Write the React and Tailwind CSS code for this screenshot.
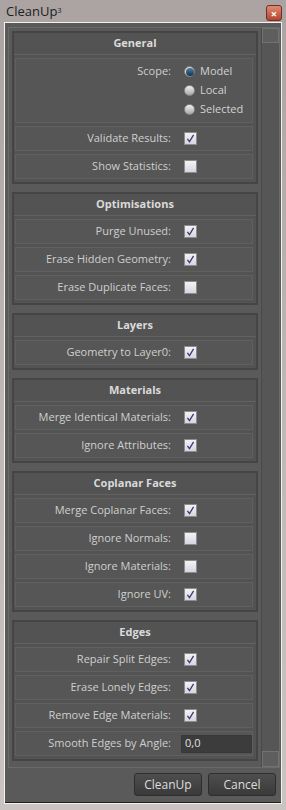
import React from 'react';

const font = { fontFamily: '"Open Sans", "Noto Sans", sans-serif' };

function Check({ on }) {
  return (
    <div className="flex h-[13px] w-[13px] items-center justify-center border border-[#8c8c8c] bg-gradient-to-b from-[#f2f2f6] to-[#d6d6e0]">
      {on && (
        <svg width="9" height="9" viewBox="0 0 9 9">
          <path d="M1.4 4.8 L3.5 7.6 L7.6 0.8" fill="none" stroke="#3d3a6e" strokeWidth="1.3" />
        </svg>
      )}
    </div>
  );
}

function Radio({ on, label }) {
  return (
    <div className="flex h-[19px] items-center">
      {on ? (
        <div className="flex h-[11px] w-[11px] items-center justify-center rounded-full border border-[#7a7a7a] bg-[#d8d8d8]">
          <div className="h-[8px] w-[8px] rounded-full bg-gradient-to-b from-[#4f82a8] to-[#14304a]" />
        </div>
      ) : (
        <div className="h-[11px] w-[11px] rounded-full border border-[#8a8a8a] bg-gradient-to-b from-[#f0f0f0] to-[#a8a8a8]" />
      )}
      <span className="ml-[5px] text-[#d2d2d2]">{label}</span>
    </div>
  );
}

function Row({ label, children }) {
  return (
    <div className="ml-[1px] mr-[3px] flex h-[25px] items-center border border-[#606060] bg-[#565656]">
      <div className="w-[155px] text-right text-[#cfcfcf]">{label}</div>
      <div className="ml-[13px]">{children}</div>
    </div>
  );
}

function Panel({ title, children }) {
  return (
    <div className="border-2 border-[#454545] bg-[#535353] pb-[3px]">
      <div className="flex h-[22px] items-center justify-center border-b border-[#626262] font-bold text-[#dadada]">
        {title}
      </div>
      <div className="flex flex-col gap-[3px] pt-[3px]">{children}</div>
    </div>
  );
}

export default function App() {
  return (
    <div className="h-[810px] w-[286px] overflow-hidden bg-gradient-to-b from-[#aaa3a1] via-[#bdb7b5] to-[#c9c4c2] text-[11px]" style={font}>
      {/* title bar */}
      <div className="flex h-[22px] items-start justify-between pl-[6px] pr-[4px]">
        <div className="pt-[2px] text-[13px] text-[#1e1e1e]">
          CleanUp<sup className="text-[7px]">3</sup>
        </div>
        <div className="mt-[5px] flex h-[16px] w-[16px] items-center justify-center rounded-[3px] border border-[#6e2e22] bg-gradient-to-b from-[#e08a74] to-[#b2442e] text-[11px] font-bold leading-none text-white">
          ×
        </div>
      </div>

      {/* window body */}
      <div className="ml-[4px] flex h-[782px] w-[278px] flex-col border border-[#f2f2f2] bg-[#5a5a5a] shadow-[inset_0_-1px_0_#1e1e1e]">
        <div className="ml-[3px] mt-[4px] flex h-[741px] w-[272px] border border-[#6a6a6a] bg-[#4c4c4c]">
          <div className="flex w-[252px] flex-col gap-[8px] overflow-hidden bg-[#5a5a5a] pl-[3px] pr-[3px] pt-[3px]">
            <Panel title="General">
              <div className="ml-[1px] mr-[3px] flex h-[65px] items-start border border-[#606060] bg-[#565656] pt-[3px]">
                <div className="flex h-[19px] w-[155px] items-center justify-end text-[#cfcfcf]">Scope:</div>
                <div className="ml-[13px] flex flex-col">
                  <Radio on label="Model" />
                  <Radio label="Local" />
                  <Radio label="Selected" />
                </div>
              </div>
              <Row label="Validate Results:"><Check on /></Row>
              <Row label="Show Statistics:"><Check /></Row>
            </Panel>

            <Panel title="Optimisations">
              <Row label="Purge Unused:"><Check on /></Row>
              <Row label="Erase Hidden Geometry:"><Check on /></Row>
              <Row label="Erase Duplicate Faces:"><Check /></Row>
            </Panel>

            <Panel title="Layers">
              <Row label="Geometry to Layer0:"><Check on /></Row>
            </Panel>

            <Panel title="Materials">
              <Row label="Merge Identical Materials:"><Check on /></Row>
              <Row label="Ignore Attributes:"><Check on /></Row>
            </Panel>

            <Panel title="Coplanar Faces">
              <Row label="Merge Coplanar Faces:"><Check on /></Row>
              <Row label="Ignore Normals:"><Check /></Row>
              <Row label="Ignore Materials:"><Check /></Row>
              <Row label="Ignore UV:"><Check on /></Row>
            </Panel>

            <Panel title="Edges">
              <Row label="Repair Split Edges:"><Check on /></Row>
              <Row label="Erase Lonely Edges:"><Check on /></Row>
              <Row label="Remove Edge Materials:"><Check on /></Row>
              <div className="ml-[1px] mr-[3px] flex h-[25px] items-center border border-[#606060] bg-[#565656]">
                <div className="w-[155px] text-right text-[#cfcfcf]">Smooth Edges by Angle:</div>
                <div className="ml-[10px] flex h-[18px] w-[71px] items-center border border-[#383838] bg-[#3c3c3c] pl-[3px] text-[#e0e0e0]">
                  0,0
                </div>
              </div>
            </Panel>
          </div>

          {/* scrollbar */}
          <div className="flex flex-1 flex-col border-l border-[#4a4a4a] bg-[#565656]">
            <div className="h-[15px] border border-[#727272] bg-[#5e5e5e]" />
            <div className="flex-1" />
            <div className="h-[16px] border border-[#727272] bg-[#5e5e5e]" />
          </div>
        </div>

        {/* buttons */}
        <div className="flex flex-1 items-start justify-end gap-[6px] pr-[5px] pt-[5px]">
          <button className="h-[23px] w-[68px] rounded-[3px] border border-[#2e2e2e] bg-gradient-to-b from-[#4e4e4e] to-[#3a3a3a] text-[12px] text-[#dedede]">
            CleanUp
          </button>
          <button className="h-[23px] w-[68px] rounded-[3px] border border-[#2e2e2e] bg-gradient-to-b from-[#4e4e4e] to-[#3a3a3a] text-[12px] text-[#dedede]">
            Cancel
          </button>
        </div>
      </div>
    </div>
  );
}
